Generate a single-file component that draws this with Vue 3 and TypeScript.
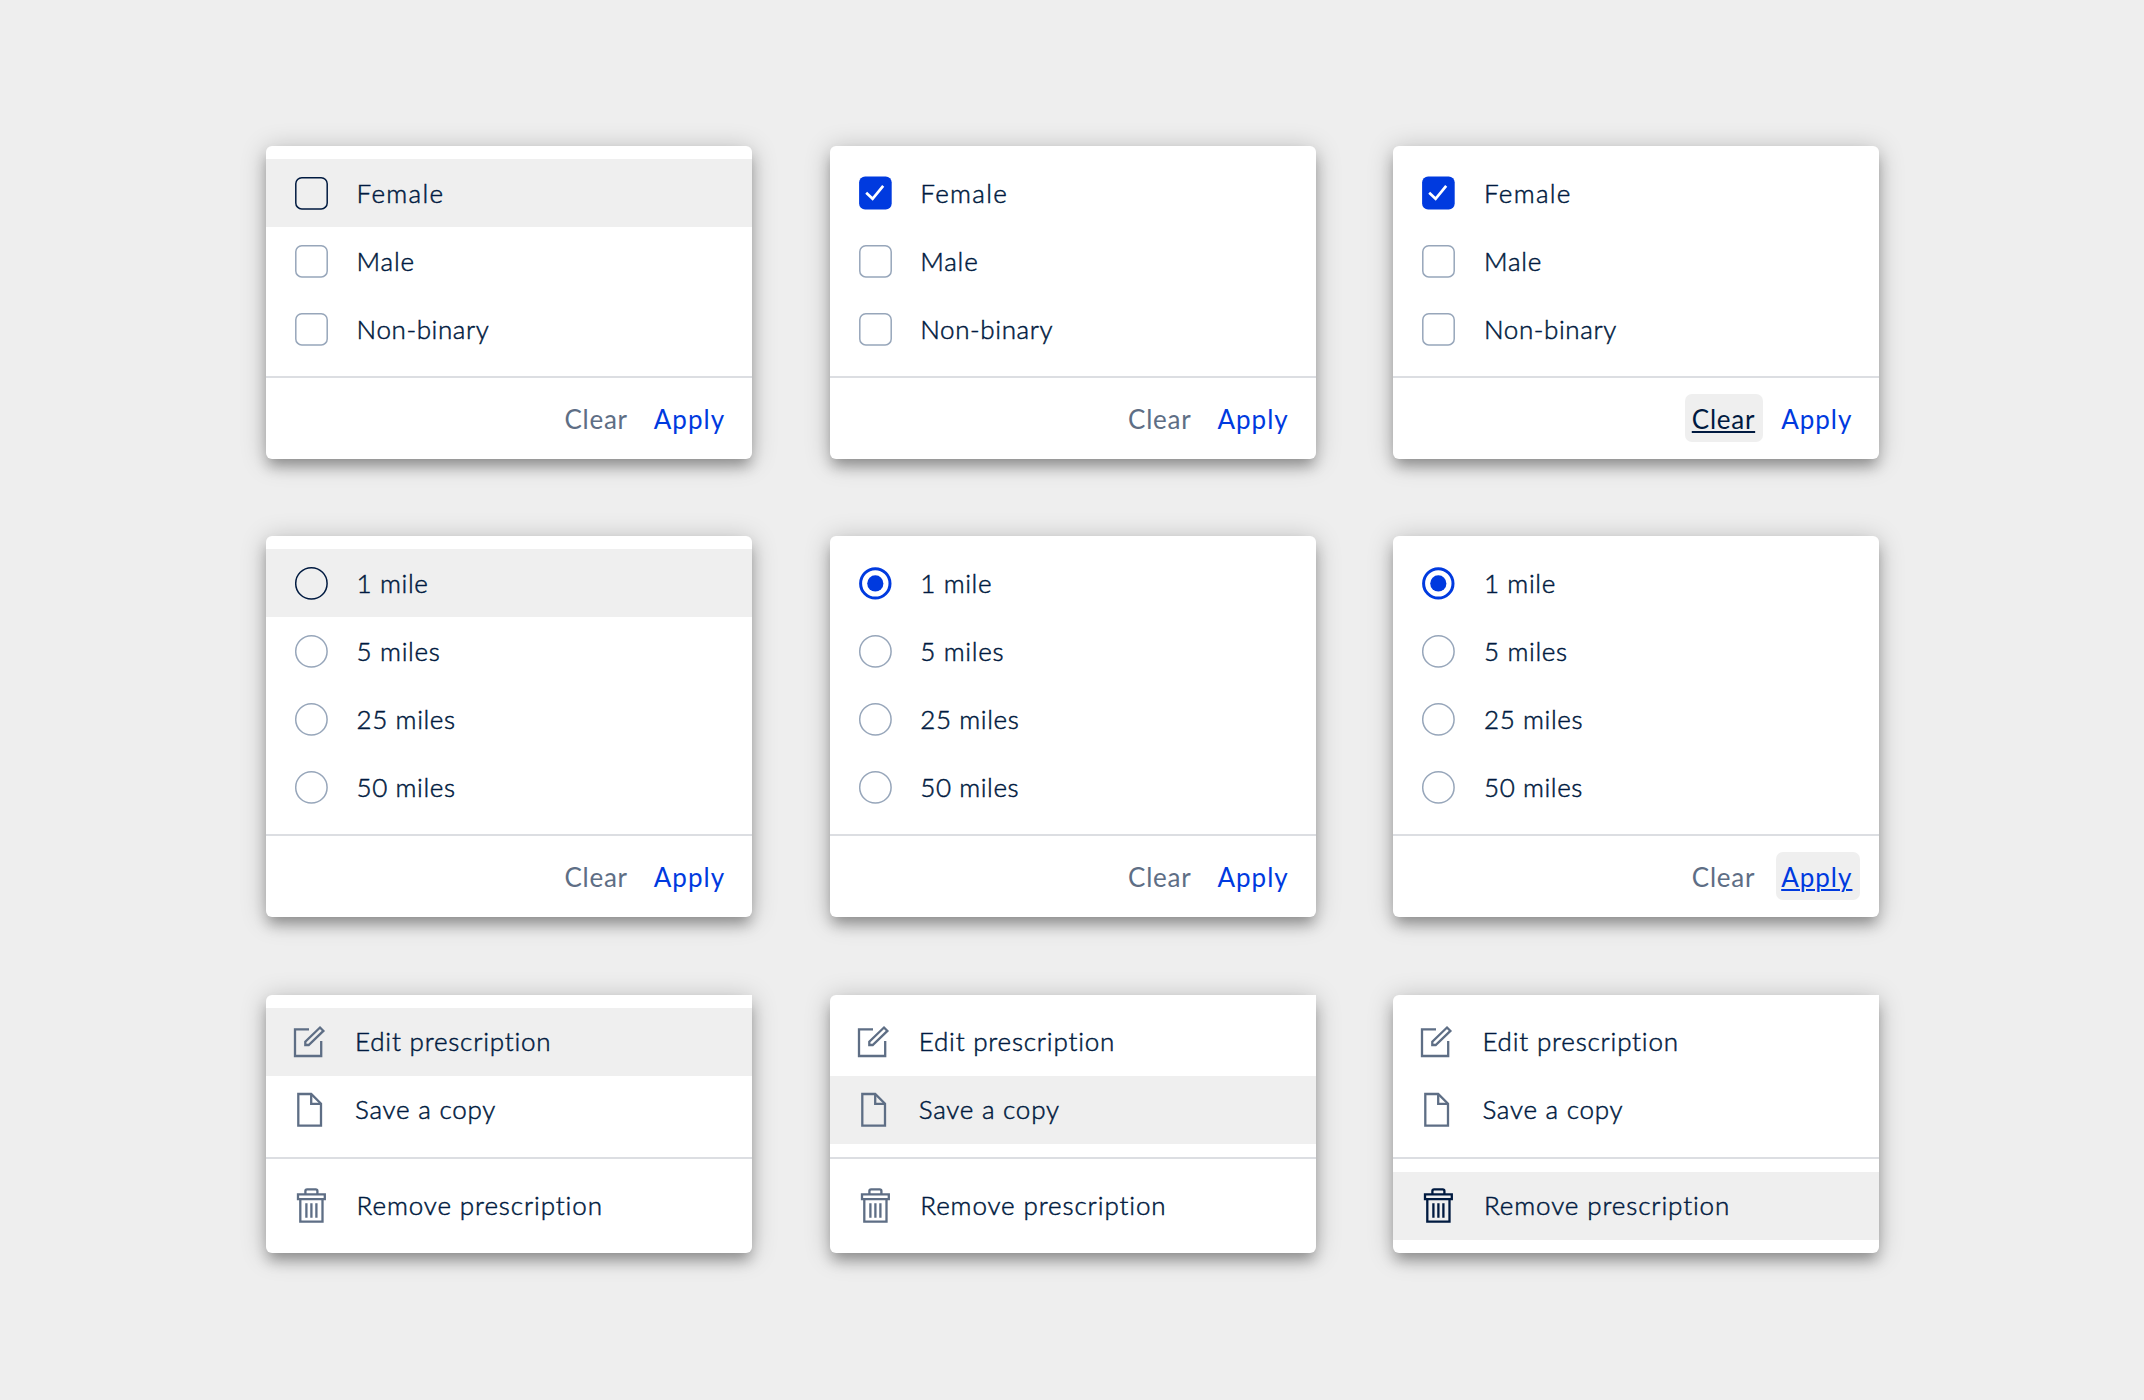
<script setup lang="ts">
type Icon = 'checkbox' | 'checked' | 'radio' | 'selected' | 'edit' | 'file' | 'trash'

interface Item {
  label: string
  icon: Icon
  /** letter spacing in px */
  track: number
  hover?: boolean
}

interface Menu {
  groups: Item[][]
  actions: boolean
  hoverAction?: 'Clear' | 'Apply'
}

function genderItems(state: 'hover' | 'picked'): Item[] {
  return [
    { label: 'Female', icon: state === 'picked' ? 'checked' : 'checkbox', track: 1.3, hover: state === 'hover' },
    { label: 'Male', icon: 'checkbox', track: 0.8 },
    { label: 'Non-binary', icon: 'checkbox', track: 0.6 },
  ]
}

function distanceItems(state: 'hover' | 'picked'): Item[] {
  return [
    { label: '1 mile', icon: state === 'picked' ? 'selected' : 'radio', track: 0.62, hover: state === 'hover' },
    { label: '5 miles', icon: 'radio', track: 0.66 },
    { label: '25 miles', icon: 'radio', track: 0.6 },
    { label: '50 miles', icon: 'radio', track: 0.58 },
  ]
}

function prescriptionGroups(hovered: number): Item[][] {
  return [
    [
      { label: 'Edit prescription', icon: 'edit', track: 0.8, hover: hovered === 0 },
      { label: 'Save a copy', icon: 'file', track: 0.76, hover: hovered === 1 },
    ],
    [{ label: 'Remove prescription', icon: 'trash', track: 0.89, hover: hovered === 2 }],
  ]
}

const menus: Menu[] = [
  { groups: [genderItems('hover')], actions: true },
  { groups: [genderItems('picked')], actions: true },
  { groups: [genderItems('picked')], actions: true, hoverAction: 'Clear' },
  { groups: [distanceItems('hover')], actions: true },
  { groups: [distanceItems('picked')], actions: true },
  { groups: [distanceItems('picked')], actions: true, hoverAction: 'Apply' },
  { groups: prescriptionGroups(0), actions: false },
  { groups: prescriptionGroups(1), actions: false },
  { groups: prescriptionGroups(2), actions: false },
]
</script>

<template>
  <main class="board">
    <section v-for="(menu, m) in menus" :key="m" class="menu" :class="{ plain: !menu.actions }">
      <ul v-for="(group, g) in menu.groups" :key="g" class="group">
        <li v-for="item in group" :key="item.label" class="item" :class="[item.icon, { hover: item.hover }]">
          <svg class="icon" viewBox="0 0 36 40" width="36" height="40" fill="none">
            <rect v-if="item.icon === 'checkbox'" x="2.8" y="4.7" width="31.4" height="31.2" rx="6" />
            <g v-else-if="item.icon === 'checked'">
              <rect class="solid" x="2.1" y="3.6" width="32.6" height="32.8" rx="6" />
              <path class="tick" d="M9.2 19.8L15.6 25.8L26.2 12.8" />
            </g>
            <circle v-else-if="item.icon === 'radio'" cx="18.4" cy="20.4" r="15.7" />
            <g v-else-if="item.icon === 'selected'">
              <circle class="ring" cx="18.3" cy="20.4" r="14.7" />
              <circle class="solid" cx="18.3" cy="20.4" r="8.1" />
            </g>
            <g v-else-if="item.icon === 'edit'">
              <path d="M16 7.3H2V34H28.2V19" />
              <path d="M27 5.5L30.4 8.9L15.7 23H12.3V19.7Z" />
            </g>
            <g v-else-if="item.icon === 'file'">
              <path d="M5.3 4H18.2L28 13.8V35.7H5.3Z" />
              <path d="M18.2 4V13.8H28" />
            </g>
            <g v-else>
              <path d="M12.4 8V5Q12.4 3.3 14.1 3.3H22.7Q24.4 3.3 24.4 5V8" />
              <path d="M5 8.3H31.8V13.2H5Z" />
              <path d="M7.3 13.2V35.6H29.5V13.2" />
              <path d="M13.4 17.3V31.8M18.4 17.3V31.8M23.4 17.3V31.8" />
            </g>
          </svg>
          <span class="label" :style="{ letterSpacing: item.track + 'px' }">{{ item.label }}</span>
        </li>
      </ul>
      <footer v-if="menu.actions" class="actions">
        <button class="action clear" :class="{ hover: menu.hoverAction === 'Clear' }">Clear</button>
        <button class="action apply" :class="{ hover: menu.hoverAction === 'Apply' }">Apply</button>
      </footer>
    </section>
  </main>
</template>

<style>
body {
  background: #eee;
}
</style>

<style scoped>
.board {
  box-sizing: border-box;
  height: 1400px;
  padding: 146px 0 0 266px;
  display: grid;
  grid-template-columns: repeat(3, 486px);
  align-content: start;
  gap: 77.8px 77.7px;
  background: #eee;
  font-family: Lato, "Open Sans", sans-serif;
  font-size: 26px;
  color: #001a40;
}
.menu {
  border-radius: 6px;
  background: #fff;
  box-shadow: 0 9px 14px -2px rgba(0, 0, 0, 0.3), 0 3px 26px rgba(0, 0, 0, 0.23);
}
.menu.plain {
  border-top-right-radius: 0;
}
.group {
  margin: 0;
  padding: 13px 0;
  list-style: none;
}
.group + .group,
.actions {
  border-top: 2px solid #dcdee2;
}
.item {
  display: flex;
  align-items: center;
  height: 68px;
  padding-left: 27px;
}
.item.hover {
  background: #efefef;
}
.icon {
  flex: none;
  stroke: #5e6e85;
  stroke-width: 2.3;
}
.checkbox .icon,
.radio .icon {
  stroke: #97a6ba;
  stroke-width: 1.5;
}
.checkbox.hover .icon,
.radio.hover .icon {
  stroke: #001a40;
}
.trash.hover .icon {
  stroke: #001a40;
}
.icon .solid {
  fill: #003adf;
  stroke: none;
}
.icon .ring {
  stroke: #003adf;
  stroke-width: 3;
}
.icon .tick {
  stroke: #fff;
  stroke-width: 2.7;
}
.label {
  margin-left: 27.6px;
  line-height: 68px;
  font-weight: 300;
  white-space: nowrap;
  -webkit-text-stroke: 0.5px currentColor;
}
.edit .label,
.file .label {
  margin-left: 26px;
}
.plain .label {
  padding-bottom: 1px;
}
.actions {
  box-sizing: border-box;
  height: 82.6px;
  padding: 15.6px 19.6px 0 0;
  display: flex;
  justify-content: flex-end;
  gap: 13px;
}
.action {
  box-sizing: border-box;
  height: 48px;
  padding: 3px 0 0;
  border: 0;
  border-radius: 7px;
  background: none;
  font: 400 26px/45px Lato, "Open Sans", sans-serif;
  text-align: left;
  text-underline-offset: 1.5px;
  text-decoration-thickness: 2px;
}
.clear {
  width: 78px;
  padding-left: 7px;
  letter-spacing: 0.75px;
  color: #5e6e85;
}
.apply {
  width: 84px;
  padding-left: 5.4px;
  letter-spacing: 1px;
  color: #003adf;
}
.action.hover {
  background: #efefef;
  text-decoration-line: underline;
}
.clear.hover {
  color: #001a40;
}
</style>
